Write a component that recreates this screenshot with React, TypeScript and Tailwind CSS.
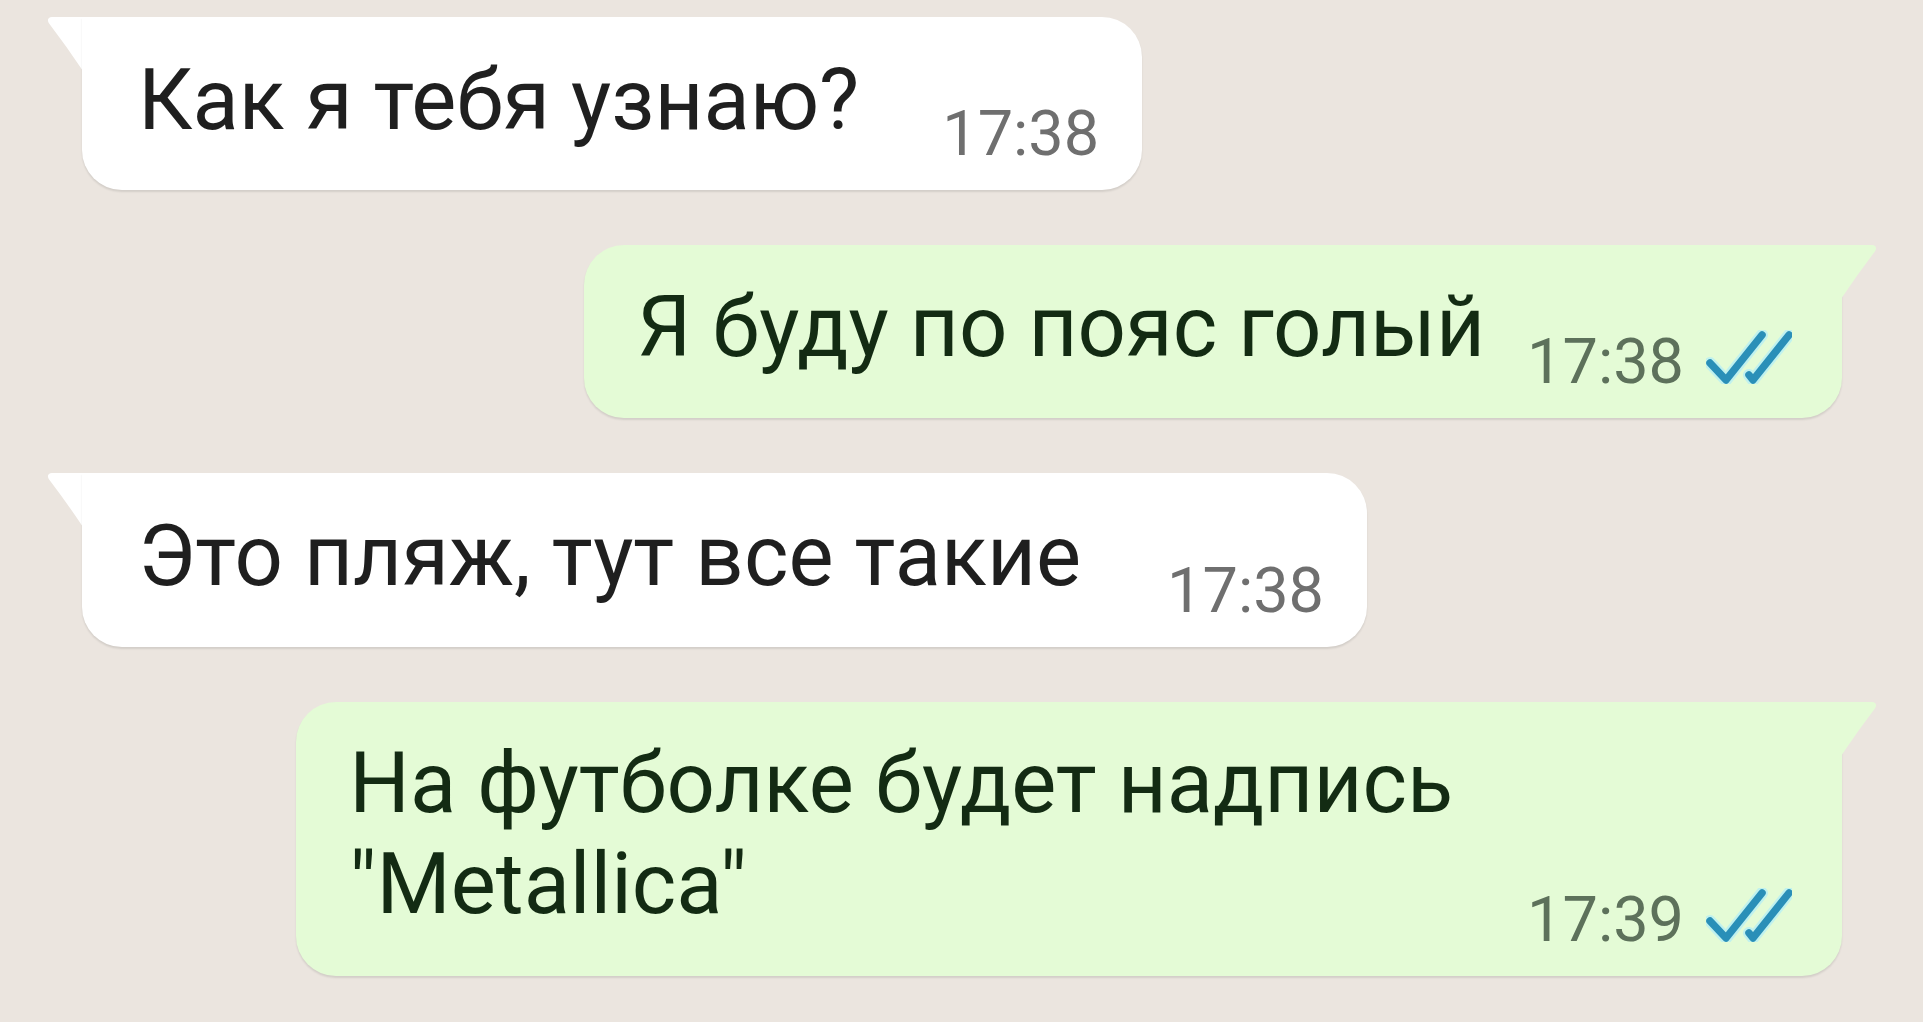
import React from "react";

function TailLeft({ color }: { color: string }) {
  return (
    <svg width="36" height="54" viewBox="0 0 36 54" className="shrink-0 -mr-px block">
      <path d="M36 0 H5 C1 0 -0.5 3.5 2.5 7 Q20 30 36 54 Z" fill={color} />
    </svg>
  );
}

function TailRight({ color }: { color: string }) {
  return (
    <svg width="36" height="54" viewBox="0 0 36 54" className="shrink-0 -ml-px block">
      <path d="M0 0 H31 C35 0 36.5 3.5 33.5 7 Q16 30 0 54 Z" fill={color} />
    </svg>
  );
}

function Checks() {
  return (
    <svg width="86" height="54" viewBox="0 0 86 54" className="block">
      <g fill="none" stroke="#a9ecff" strokeWidth="12" strokeLinecap="round" strokeLinejoin="round" opacity="0.6">
        <path d="M4 33 L20 50 L56 5" />
        <path d="M43 45 L47 50 L83 5" />
      </g>
      <g fill="none" stroke="#2a8fb8" strokeWidth="7.5" strokeLinecap="round" strokeLinejoin="round">
        <path d="M4 33 L20 50 L56 5" />
        <path d="M43 45 L47 50 L83 5" />
      </g>
    </svg>
  );
}

export default function App() {
  return (
    <div className="w-[1923px] h-[1022px] overflow-hidden bg-[#ebe5df] font-['Roboto',sans-serif] pt-[17px] flex flex-col gap-[55px]">
      {/* 1 incoming */}
      <div className="flex items-start pl-[47px]">
        <TailLeft color="#ffffff" />
        <div className="bg-white rounded-[40px] rounded-tl-none shadow-[0_2px_2px_rgba(0,0,0,0.10)] h-[173px] pl-[56px] pr-[43px] pt-[33px] pb-[25px] flex items-end gap-[83px]">
          <span className="text-[85px] leading-[101px] text-[#1f1f1f] self-start whitespace-nowrap">Как я тебя узнаю?</span>
          <span className="text-[63px] leading-[63px] text-[#6f6f6f] whitespace-nowrap">17:38</span>
        </div>
      </div>

      {/* 2 outgoing */}
      <div className="flex items-start justify-end pr-[46px]">
        <div className="bg-[#e4fbd6] rounded-[40px] rounded-tr-none shadow-[0_2px_2px_rgba(0,0,0,0.10)] h-[173px] pl-[53px] pr-[50px] pt-[32px] pb-[25px] flex items-end">
          <span className="text-[85px] leading-[101px] text-[#132b13] self-start whitespace-nowrap">Я буду по пояс голый</span>
          <span className="ml-[42px] text-[63px] leading-[63px] text-[#5d715b] whitespace-nowrap">17:38</span>
          <span className="ml-[22px] mb-[9px]">
            <Checks />
          </span>
        </div>
        <TailRight color="#e4fbd6" />
      </div>

      {/* 3 incoming */}
      <div className="flex items-start pl-[47px]">
        <TailLeft color="#ffffff" />
        <div className="bg-white rounded-[40px] rounded-tl-none shadow-[0_2px_2px_rgba(0,0,0,0.10)] h-[174px] pl-[56px] pr-[43px] pt-[33px] pb-[25px] flex items-end gap-[86px]">
          <span className="text-[85px] leading-[101px] text-[#1f1f1f] self-start whitespace-nowrap">Это пляж, тут все такие</span>
          <span className="text-[63px] leading-[63px] text-[#6f6f6f] whitespace-nowrap">17:38</span>
        </div>
      </div>

      {/* 4 outgoing */}
      <div className="flex items-start justify-end pr-[46px]">
        <div className="bg-[#e4fbd6] rounded-[40px] rounded-tr-none shadow-[0_2px_2px_rgba(0,0,0,0.10)] h-[274px] pl-[53px] pr-[50px] pt-[31px] pb-[25px] flex items-end">
          <span className="text-[85px] leading-[101px] text-[#132b13] self-start whitespace-nowrap">
            На футболке будет надпись
            <br />
            "Metallica"
          </span>
          <span className="ml-[74px] text-[63px] leading-[63px] text-[#5d715b] whitespace-nowrap">17:39</span>
          <span className="ml-[22px] mb-[9px]">
            <Checks />
          </span>
        </div>
        <TailRight color="#e4fbd6" />
      </div>
    </div>
  );
}
